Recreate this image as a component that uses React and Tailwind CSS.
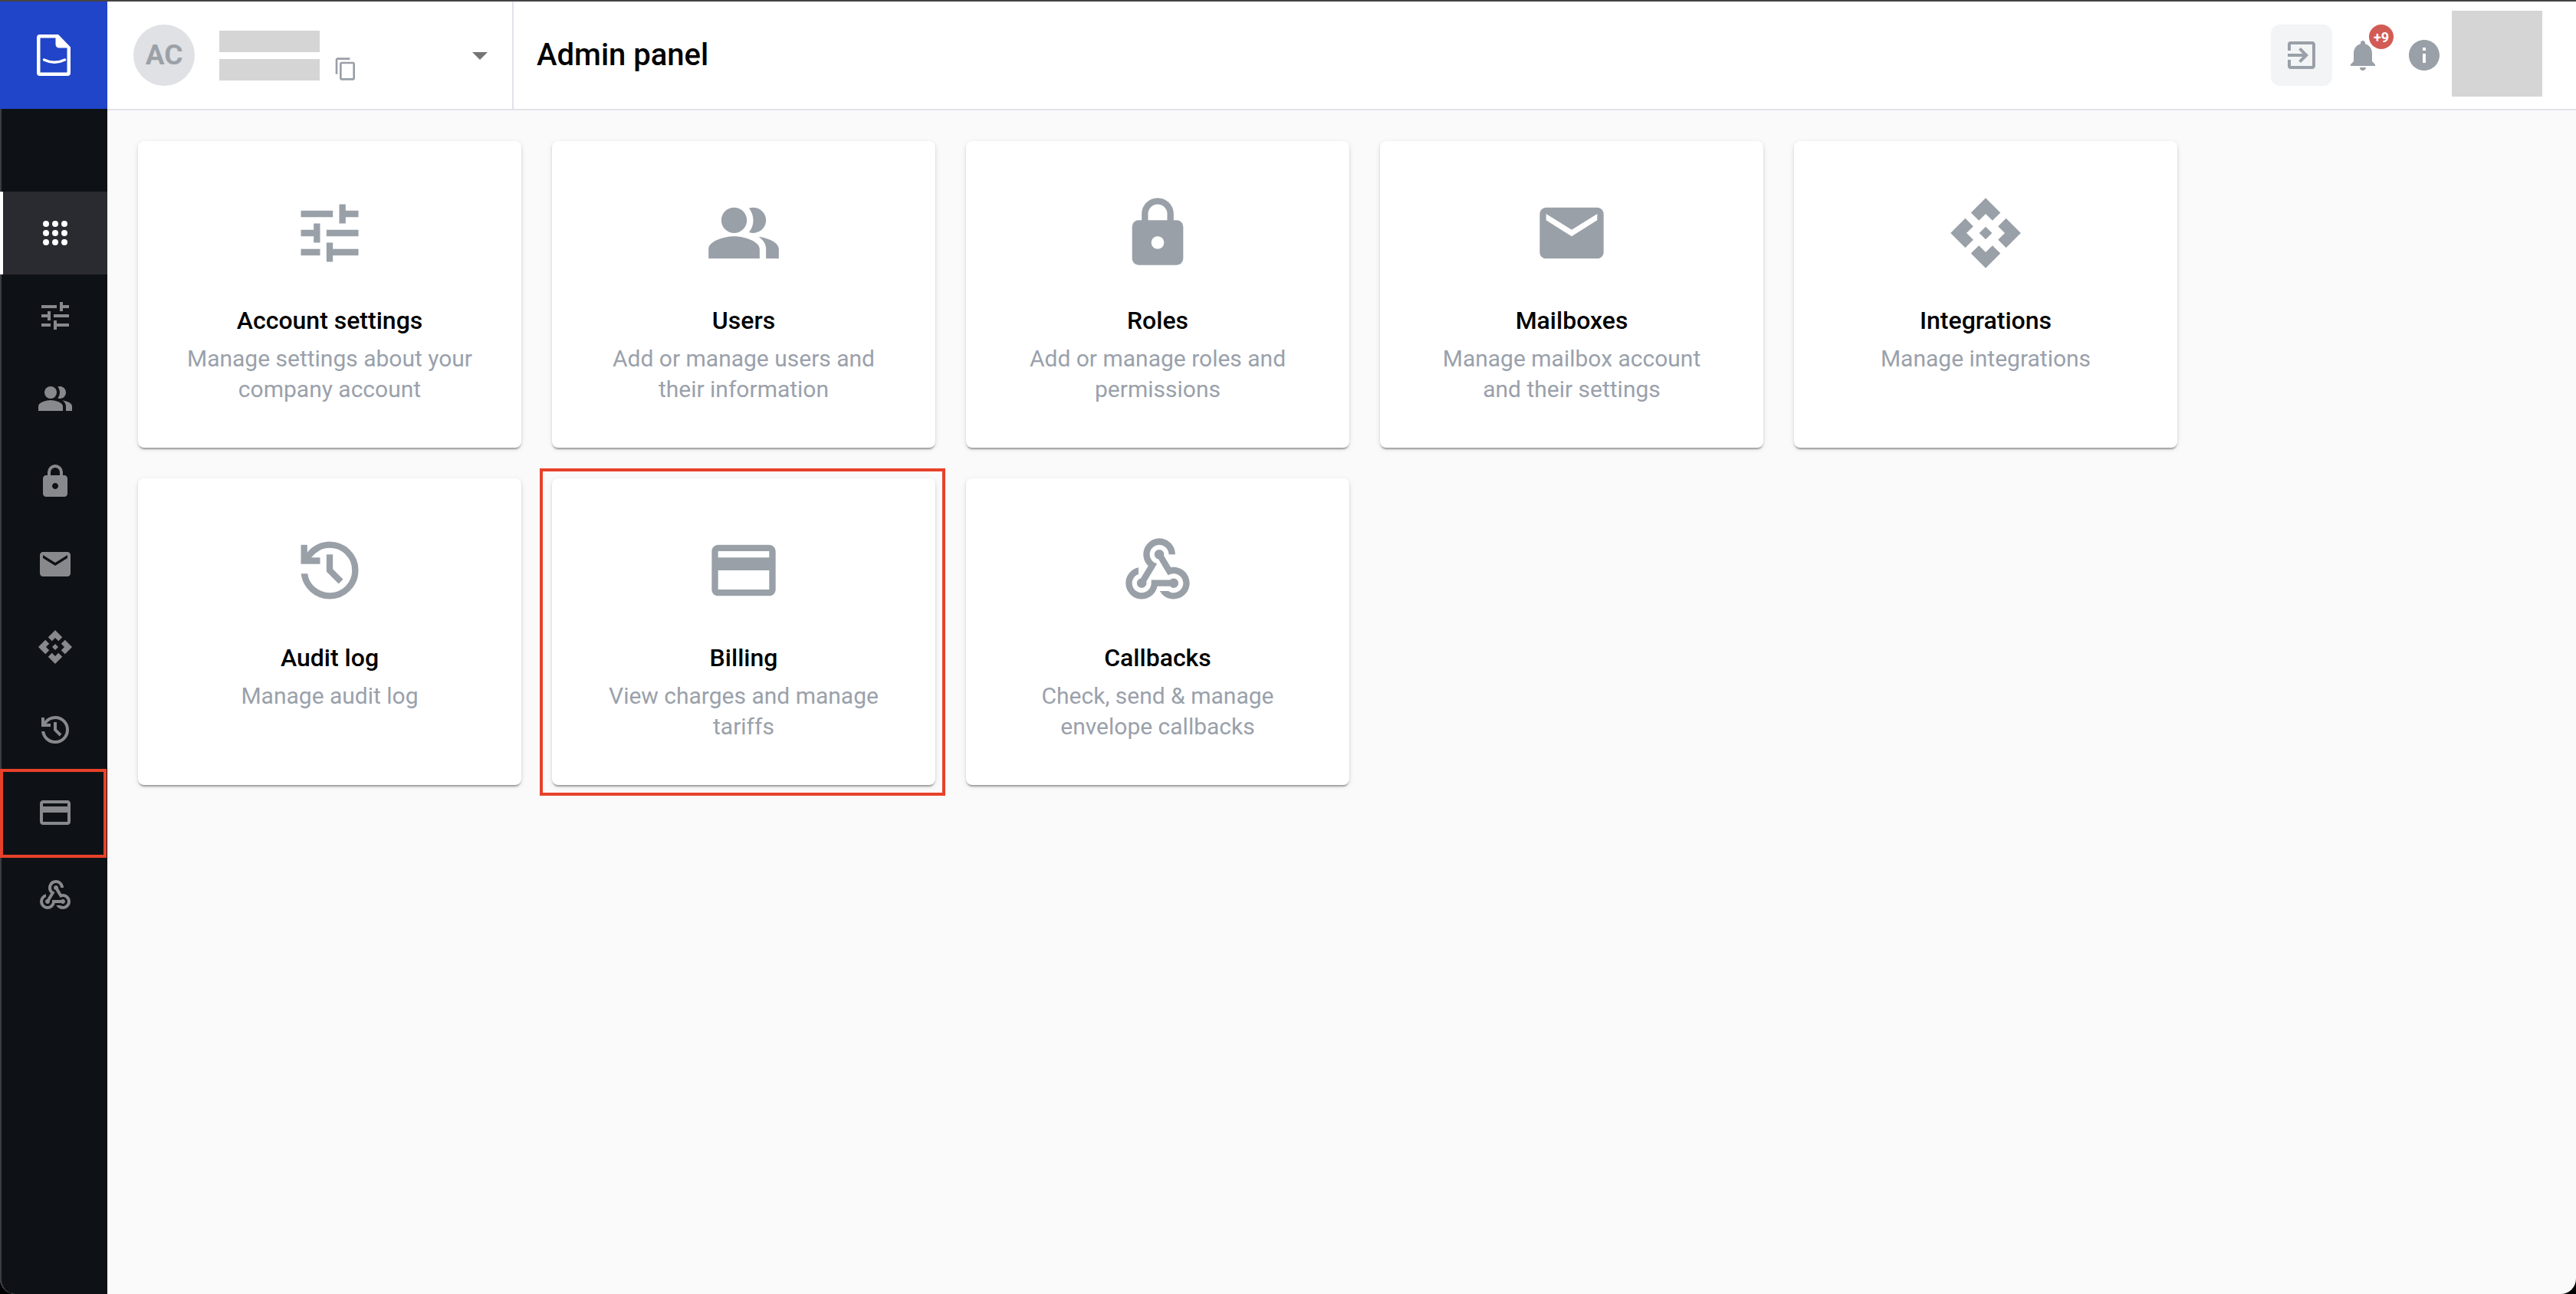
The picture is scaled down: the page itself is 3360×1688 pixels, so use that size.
import {
  MdApi,
  MdArrowDropDown,
  MdContentCopy,
  MdCreditCard,
  MdExitToApp,
  MdInfo,
  MdMail,
  MdNotifications,
  MdPeopleAlt,
  MdTune,
  MdWebhook,
} from "react-icons/md";

const Dots = ({ size }) => (
  <svg width={size} height={size} viewBox="0 0 24 24" fill="currentColor">
    {[6, 12, 18].map((y) =>
      [6, 12, 18].map((x) => <circle key={`${x}-${y}`} cx={x} cy={y} r="2" />)
    )}
  </svg>
);

// material symbols versions, react-icons only has the older shapes
const HistoryIcon = ({ size, className }) => (
  <svg width={size} height={size} viewBox="0 -960 960 960" fill="currentColor" className={className}>
    <path d="M480-120q-138 0-240.5-91.5T122-440h82q14 104 92.5 172T480-200q117 0 198.5-81.5T760-480q0-117-81.5-198.5T480-760q-69 0-129 32t-101 88h110v80H120v-240h80v94q51-64 124.5-99T480-840q150 0 255 105t105 255q0 150-105 255T480-120Zm112-192L440-464v-216h80v184l128 128-56 56Z" />
  </svg>
);

const LockIcon = ({ size, className }) => (
  <svg width={size} height={size} viewBox="0 -960 960 960" fill="currentColor" className={className}>
    <path d="M240-80q-33 0-56.5-23.5T160-160v-400q0-33 23.5-56.5T240-640h40v-80q0-83 58.5-141.5T480-920q83 0 141.5 58.5T680-720v80h40q33 0 56.5 23.5T800-560v400q0 33-23.5 56.5T720-80H240Zm240-200q33 0 56.5-23.5T560-360q0-33-23.5-56.5T480-440q-33 0-56.5 23.5T400-360q0 33 23.5 56.5T480-280ZM360-640h240v-80q0-50-35-85t-85-35q-50 0-85 35t-35 85v80Z" />
  </svg>
);

const Logo = () => (
  <svg width="44" height="54" viewBox="0 0 44 54" fill="none">
    <path
      fill="#fff"
      fillRule="evenodd"
      d="M4 0H28L44 16.5V50a4 4 0 0 1-4 4H4a4 4 0 0 1-4-4V4a4 4 0 0 1 4-4ZM4.5 4.5H24.5V13a4.5 4.5 0 0 0 4.5 4.5H39.5V49.5H4.5Z"
    />
    <path d="M9.5 33Q23 39.5 36.5 33" stroke="#fff" strokeWidth="3.5" strokeLinecap="round" />
  </svg>
);

const navItems = [MdTune, MdPeopleAlt, LockIcon, MdMail, MdApi, HistoryIcon, MdCreditCard, MdWebhook];

const cards = [
  { icon: MdTune, title: "Account settings", desc: ["Manage settings about your", "company account"] },
  { icon: MdPeopleAlt, title: "Users", desc: ["Add or manage users and", "their information"] },
  { icon: LockIcon, title: "Roles", desc: ["Add or manage roles and", "permissions"] },
  { icon: MdMail, title: "Mailboxes", desc: ["Manage mailbox account", "and their settings"] },
  { icon: MdApi, title: "Integrations", desc: ["Manage integrations"] },
  { icon: HistoryIcon, title: "Audit log", desc: ["Manage audit log"] },
  { icon: MdCreditCard, title: "Billing", desc: ["View charges and manage", "tariffs"], marked: true },
  { icon: MdWebhook, title: "Callbacks", desc: ["Check, send & manage", "envelope callbacks"] },
];

const Card = ({ icon: Icon, title, desc, marked }) => (
  <div className="relative">
    <div className="flex h-[400px] flex-col items-center rounded-lg bg-white pt-[70px] text-center shadow-[0_4px_2px_-2px_rgba(0,0,0,0.2),0_2px_2px_0_rgba(0,0,0,0.14),0_2px_6px_0_rgba(0,0,0,0.12)]">
      <Icon size={100} className="text-[#9aa0a8]" />
      <p className="mt-[44px] text-[32px] leading-[40px] font-medium text-black">{title}</p>
      <div className="mt-[10px] text-[30px] leading-[40px] text-[#9aa1ab]">
        {desc.map((line) => (
          <p key={line}>{line}</p>
        ))}
      </div>
    </div>
    {marked && (
      <div className="absolute -top-[13px] -right-[13px] -bottom-[14px] -left-[16px] border-4 border-[#e8412a]" />
    )}
  </div>
);

export default function App() {
  return (
    <div className="h-[1688px] w-[3360px] bg-black">
      <div className="flex h-full flex-col overflow-hidden rounded-b-[20px] bg-[#fafafa] font-['Roboto',sans-serif]">
        <div className="h-[2px] bg-[#444444]" />
        <div className="flex min-h-0 flex-1">
          {/* sidebar */}
          <aside className="flex w-[140px] flex-col bg-[#0e1216]">
            <div className="flex h-[140px] items-center justify-center bg-[#2145c8]">
              <Logo />
            </div>
            <nav className="flex flex-1 flex-col rounded-bl-[20px] border-l-2 border-[#3a3d42] pt-[108px]">
              <div className="-ml-[2px] flex h-[108px] items-center justify-center border-l-4 border-white bg-[#2a2b30] text-white">
                <Dots size={48} />
              </div>
              {navItems.map((Icon, i) => (
                <div key={i} className="relative flex h-[108px] items-center justify-center pl-[2px] text-[#88898d]">
                  <Icon size={48} />
                  {Icon === MdCreditCard && (
                    <div className="absolute -top-[3px] right-[1px] -bottom-[5px] -left-[2px] border-4 border-[#e8412a]" />
                  )}
                </div>
              ))}
            </nav>
          </aside>

          <div className="flex min-w-0 flex-1 flex-col">
            {/* header */}
            <header className="flex h-[142px] items-stretch border-b-2 border-[#e2e2ea] bg-white">
              <div className="flex w-[530px] items-center border-r-2 border-[#e2e2ea] pl-[34px]">
                <div className="flex h-[80px] w-[80px] items-center justify-center rounded-full bg-[#e0e1e5] text-[37px] font-bold text-[#9ca1a8]">
                  AC
                </div>
                <div className="ml-[32px] flex flex-col gap-[9px]">
                  <div className="h-[28px] w-[131px] bg-[#d5d5d5]" />
                  <div className="h-[28px] w-[131px] bg-[#d5d5d5]" />
                </div>
                <MdContentCopy size={32} className="mt-[36px] ml-[18px] text-[#9aa0a8]" />
                <MdArrowDropDown size={48} className="ml-[135px] text-[#757575]" />
              </div>
              <h1 className="ml-[30px] flex items-center text-[40px] font-medium text-black">Admin panel</h1>
              <div className="ml-auto flex items-center pr-[44px] text-[#9aa0a8]">
                <div className="flex h-[80px] w-[80px] items-center justify-center rounded-xl bg-[#f3f4f6]">
                  <MdExitToApp size={48} />
                </div>
                <div className="relative ml-[16px]">
                  <MdNotifications size={48} />
                  <span className="absolute -top-[16px] -right-[16px] flex h-[32px] w-[32px] items-center justify-center rounded-full bg-[#d25b55] text-[18px] font-bold text-white">
                    +9
                  </span>
                </div>
                <MdInfo size={48} className="ml-[32px]" />
                <div className="-mt-[4px] ml-[12px] h-[112px] w-[118px] bg-[#d5d5d5]" />
              </div>
            </header>

            {/* cards */}
            <main className="grid grid-cols-[repeat(5,500px)] gap-[40px] p-[40px]">
              {cards.map((card) => (
                <Card key={card.title} {...card} />
              ))}
            </main>
          </div>
        </div>
      </div>
    </div>
  );
}
